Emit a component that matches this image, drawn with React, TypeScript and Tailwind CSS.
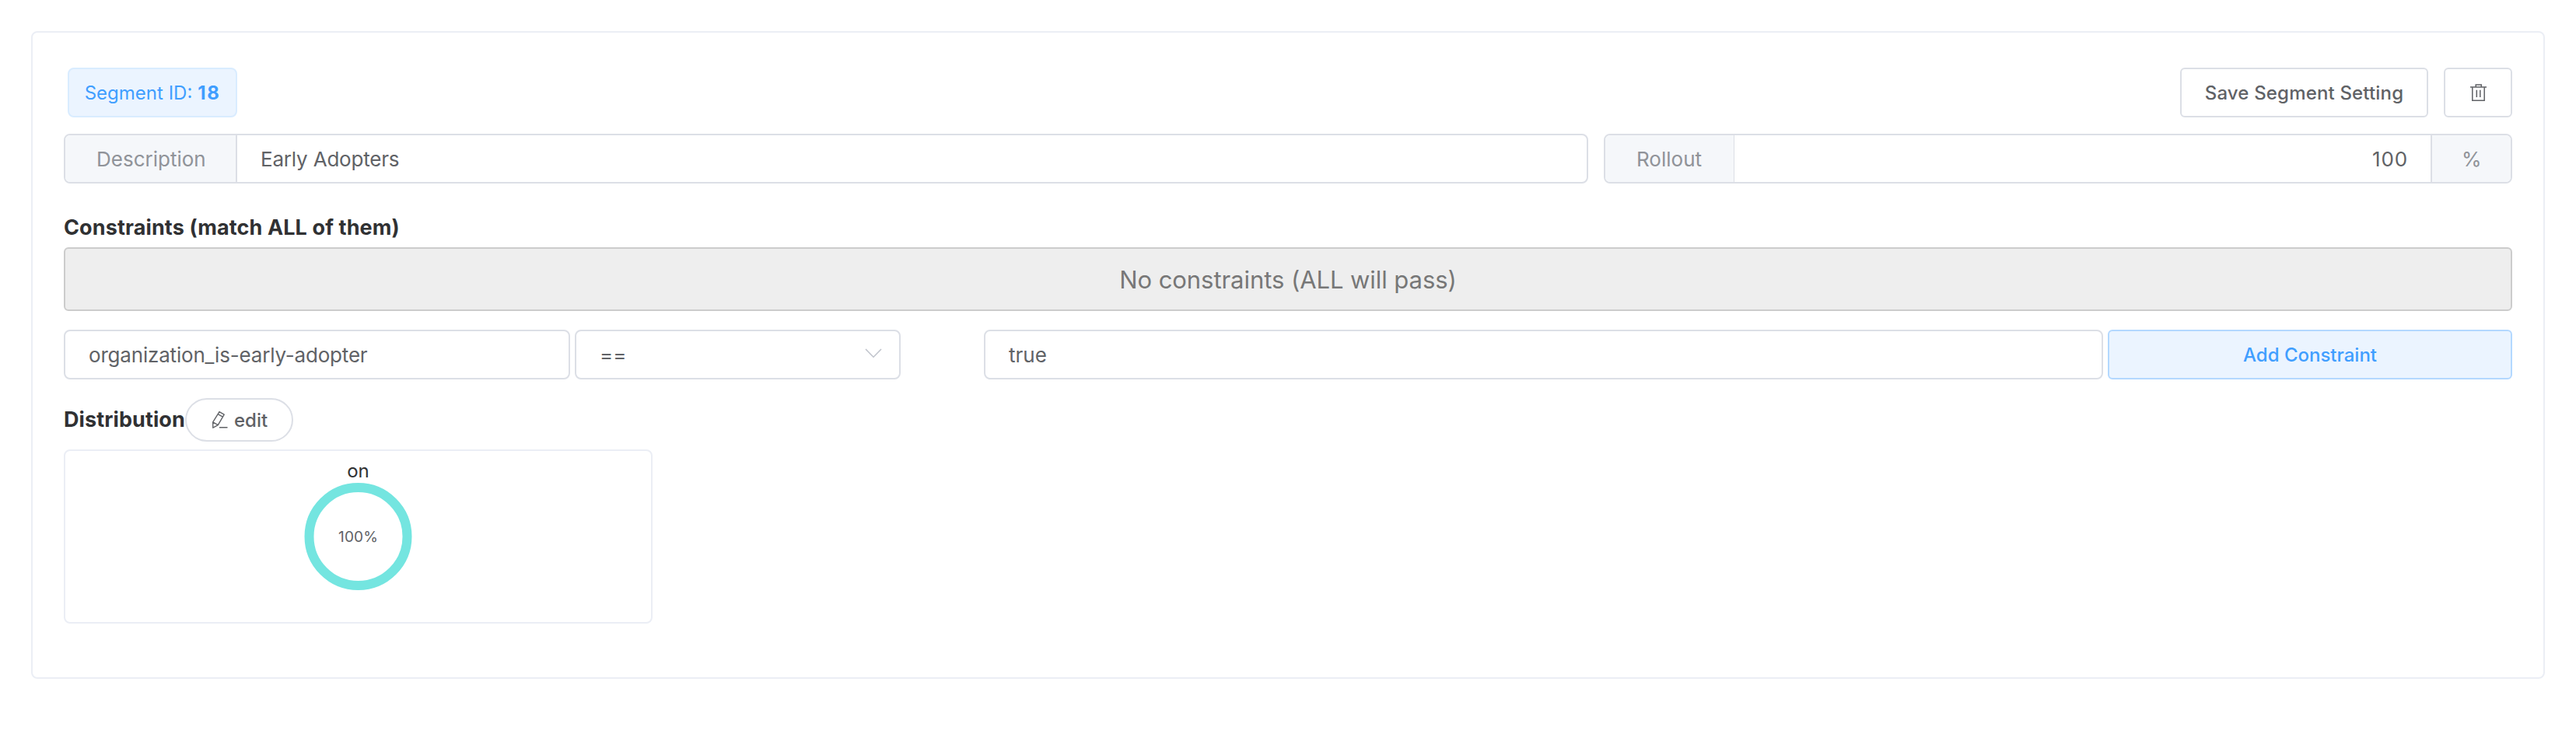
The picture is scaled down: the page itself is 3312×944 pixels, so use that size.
import type { ReactNode } from "react";

function TrashIcon() {
  return (
    <svg width="24" height="24" viewBox="0 0 24 24" fill="none" stroke="#606266" strokeWidth="1.5">
      <path d="M2 5H23M9.2 5V2H16.3V5M4.8 5V22.2H20.2V5M10.3 8.8V18M14.8 8.8V18" />
    </svg>
  );
}

function EditIcon() {
  return (
    <svg width="24" height="24" viewBox="0 0 24 24" fill="none" stroke="#606266" strokeWidth="1.4" strokeLinejoin="round">
      <path d="M11 1.6L17.2 5.2L9.3 18.7L2.8 22.2L2.7 14.9ZM9.2 4.6L15.4 8.2M2.7 14.9L9.3 18.7M11 21.8H21.5" />
    </svg>
  );
}

function ChevronIcon() {
  return (
    <svg width="22" height="13" viewBox="0 0 22 13" fill="none" stroke="#c0c4cc" strokeWidth="1.6">
      <path d="M1 1L11 11.2L21 1" />
    </svg>
  );
}

function Field({ className, children }: { className: string; children: ReactNode }) {
  return (
    <div className={`flex h-16 items-center rounded-lg border-2 border-[#dcdfe6] bg-white px-[30px] pt-0.5 text-[26px] text-[#606266] ${className}`}>
      {children}
    </div>
  );
}

export default function App() {
  return (
    <div className="h-[944px] w-[3312px] bg-white p-10 font-['Inter','Liberation_Sans',sans-serif] leading-none text-[#303133]">
      <section className="h-[833px] rounded-lg border-2 border-[#ebeef5] px-10 pt-[45px]">
        <header className="flex h-16 items-center justify-between pl-[5px]">
          <div className="flex h-16 w-[218px] items-center justify-center gap-[7px] rounded-lg border-2 border-[#d9ecff] bg-[#ebf4ff] pt-0.5 text-2xl leading-none text-[#409eff]">
            <span>Segment ID:</span>
            <b className="font-bold tracking-[1.5px]">18</b>
          </div>
          <div className="flex gap-5">
            <button className="h-16 w-[319px] rounded-md border-2 border-[#dcdfe6] pt-0.5 text-2xl leading-none font-medium tracking-[0.17px] text-[#606266]">
              Save Segment Setting
            </button>
            <button className="flex h-16 w-[88px] items-center justify-center rounded-md border-2 border-[#dcdfe6]">
              <TrashIcon />
            </button>
          </div>
        </header>

        <div className="mt-[21px] flex gap-5 text-[26px]">
          <div className="flex h-16 w-[1960px] overflow-hidden rounded-lg border-2 border-[#dcdfe6]">
            <div className="flex w-[221px] items-center border-r-2 border-[#dcdfe6] bg-[#f5f7fa] pt-0.5 pl-10 text-[#909399]">Description</div>
            <div className="flex grow items-center pt-0.5 pl-[30px] tracking-[-0.19px] text-[#606266]">Early Adopters</div>
          </div>
          <div className="flex h-16 grow overflow-hidden rounded-lg border-2 border-[#dcdfe6]">
            <div className="flex w-[166px] items-center border-r border-[#dcdfe6] bg-[#f5f7fa] pt-0.5 pl-10 text-[#909399]">Rollout</div>
            <div className="flex grow items-center justify-end pt-0.5 pr-[29px] tracking-[0.9px] text-[#606266]">100</div>
            <div className="flex w-[103px] items-center border-l-2 border-[#dcdfe6] bg-[#f5f7fa] pt-0.5 pl-[38px] text-[#909399]">%</div>
          </div>
        </div>

        <h5 className="flex h-[82px] items-center pt-[31px] text-[27px] font-bold tracking-[0.12px]">
          Constraints (match ALL of them)
        </h5>
        <div className="flex h-[82px] items-center justify-center rounded-md border-2 border-[#ccc] bg-[#eee] pt-px text-[31px] tracking-[-0.06px] text-[#777]">
          No constraints (ALL will pass)
        </div>

        <div className="mt-6 flex">
          <Field className="w-[651px] tracking-[-0.19px]">organization_is-early-adopter</Field>
          <Field className="ml-1.5 w-[419px] justify-between !pr-[22px]">
            <span>==</span>
            <span className="-mt-1.5">
              <ChevronIcon />
            </span>
          </Field>
          <Field className="ml-[107px] w-[1439px]">true</Field>
          <button className="ml-1.5 h-16 grow rounded-md border-2 border-[#b3d8ff] bg-[#ebf4ff] pt-0.5 text-2xl leading-none font-medium text-[#409eff]">
            Add Constraint
          </button>
        </div>

        <div className="mt-6 flex h-14 items-center text-[27px] font-bold">
          <span className="w-[156px] pb-0.5 tracking-[0.1px]">Distribution</span>
          <button className="flex h-14 w-[139px] items-center rounded-full border-2 border-[#dcdfe6] pl-[31px] text-2xl leading-none font-medium text-[#606266]">
            <EditIcon />
            <span className="ml-1.5 pt-px">edit</span>
          </button>
        </div>

        <div className="mt-2.5 flex h-56 w-[757px] flex-col items-center rounded-lg border-2 border-[#ebeef5] pt-3">
          <span className="text-2xl leading-7">on</span>
          <svg width="140" height="140" viewBox="0 0 140 140">
            <circle cx="69.5" cy="70" r="63" fill="none" stroke="#74e5e0" strokeWidth="12" />
            <text x="69.5" y="77" textAnchor="middle" fontSize="19" letterSpacing="0.15" fill="#606266">
              100%
            </text>
          </svg>
        </div>
      </section>
    </div>
  );
}
